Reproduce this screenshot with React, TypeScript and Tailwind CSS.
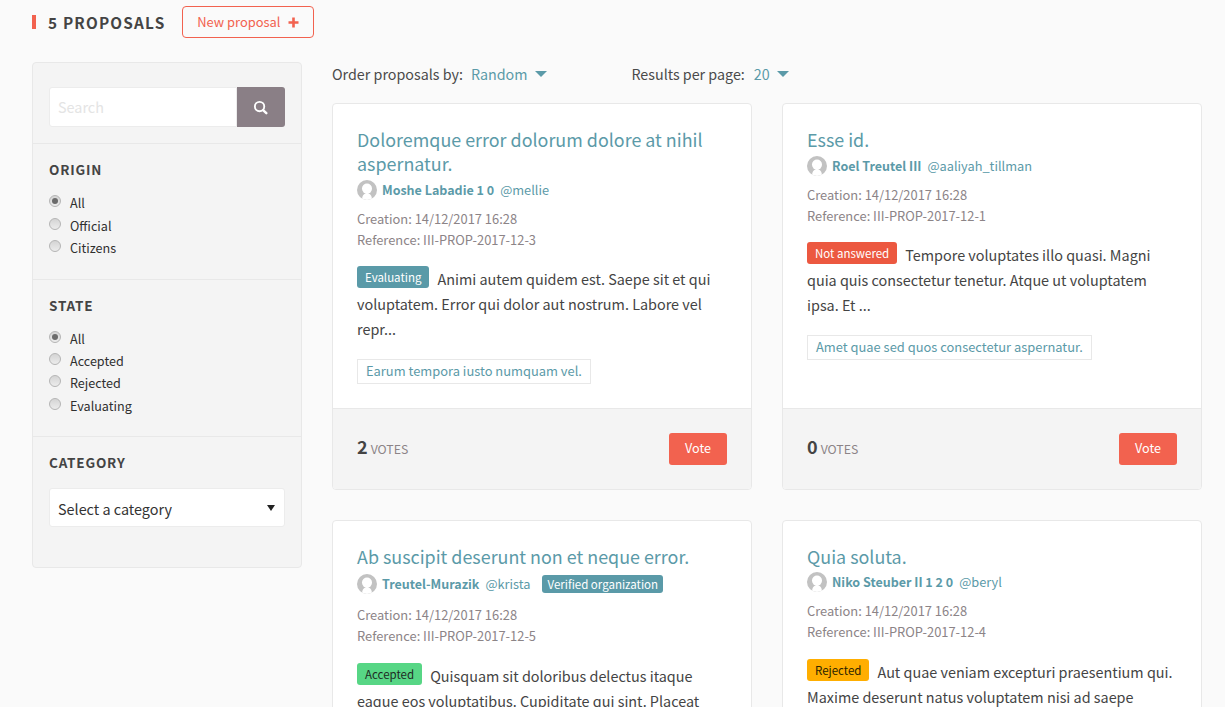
import React from "react";

const FONT = "[font-family:'Noto_Sans_CJK_SC','Liberation_Sans',sans-serif]";

function Avatar() {
  return (
    <svg width="20" height="20" viewBox="0 0 20 20" className="shrink-0">
      <defs>
        <clipPath id="av"><circle cx="10" cy="10" r="10" /></clipPath>
      </defs>
      <g clipPath="url(#av)">
        <rect width="20" height="20" fill="#c2c2c2" />
        <circle cx="10" cy="8.6" r="5" fill="#ffffff" />
        <path d="M5 20 C5 15 7.5 13 10 13 C12.5 13 15 15 15 20 Z" fill="#ffffff" />
      </g>
    </svg>
  );
}

function Radio({ label, checked, mb }: { label: string; checked?: boolean; mb: string }) {
  return (
    <div className={`flex items-start ${mb}`}>
      <span className="mt-[1px] w-[12px] h-[12px] rounded-full border border-[#b5b5b5] bg-gradient-to-b from-[#d4d4d4] to-[#ececec] flex items-center justify-center shrink-0">
        {checked && <span className="w-[6px] h-[6px] rounded-full bg-[#6b6b6b]" />}
      </span>
      <span className="ml-[9px] text-[12.6px] leading-[18px] text-[#2f2f2f]">{label}</span>
    </div>
  );
}

function FilterTitle({ children }: { children: React.ReactNode }) {
  return <div className="text-[13.5px] leading-[20px] font-semibold tracking-[0.8px] text-[#444444]">{children}</div>;
}

type P = {
  title: string[];
  author: string;
  handle: string;
  org?: boolean;
  ref_: string;
  badge: string;
  badgeCls: string;
  lines: string[];
  tag?: string;
  votes?: string;
};

function Card({ p }: { p: P }) {
  return (
    <div className="flex flex-col bg-white border border-[#e8e8e8] rounded-[4px] overflow-hidden">
      <div className="flex-1 px-[24px] pt-[23px] pb-[24px]">
        <h3 className="text-[17.9px] leading-[24px] text-[#5b9aa8] font-normal">
          {p.title.map((t) => (
            <div key={t}>{t}</div>
          ))}
        </h3>
        <div className={`flex items-center ${p.org ? "h-[26px]" : "h-[22px]"} mt-[3.6px] text-[12.5px] leading-[20px]`}>
          <Avatar />
          <span className="ml-[5px] font-semibold text-[#5b9aa8]">{p.author}</span>
          <span className="ml-[6px] text-[12.8px] text-[#5b9aa8]">{p.handle}</span>
          {p.org && (
            <span className="ml-[12px] px-[5px] h-[18px] leading-[18px] rounded-[3px] bg-[#5a9aa8] text-white text-[11.5px]">
              Verified organization
            </span>
          )}
        </div>
        <div className="mt-[7px] text-[12.9px] leading-[21px] text-[#8c8487]">
          <div>Creation: 14/12/2017 16:28</div>
          <div>{p.ref_}</div>
        </div>
        <div className="mt-[16.4px] text-[14.4px] leading-[25px] text-[#444444]">
          {p.lines.map((l, i) => (
            <div key={l} className="whitespace-nowrap">
              {i === 0 && (
                <span className={`inline-block align-top mr-[8px] px-[8px] h-[22px] leading-[22px] rounded-[3px] text-[11.5px] ${p.badgeCls}`}>
                  {p.badge}
                </span>
              )}
              {l}
            </div>
          ))}
        </div>
        {p.tag && (
          <div className="mt-[16px]">
            <span className="inline-block border border-[#e8e8e8] px-[8px] h-[25px] leading-[22px] text-[12.9px] text-[#5b9aa8]">
              {p.tag}
            </span>
          </div>
        )}
      </div>
      {p.votes && (
        <div className="h-[80.6px] bg-[#f4f4f4] border-t border-[#e8e8e8] px-[24px] flex items-center justify-between">
          <div className="flex items-baseline mb-[5px]">
            <span className="text-[18px] font-semibold text-[#444444]">{p.votes}</span>
            <span className="ml-[3px] text-[12.3px] text-[#8c8487]">VOTES</span>
          </div>
          <button className="w-[58px] h-[32px] rounded-[3px] bg-[#f2624f] text-white text-[12.6px]">Vote</button>
        </div>
      )}
    </div>
  );
}

const cards: P[] = [
  {
    title: ["Doloremque error dolorum dolore at nihil", "aspernatur."],
    author: "Moshe Labadie 1 0",
    handle: "@mellie",
    ref_: "Reference: III-PROP-2017-12-3",
    badge: "Evaluating",
    badgeCls: "bg-[#5a9aa8] text-white",
    lines: ["Animi autem quidem est. Saepe sit et qui", "voluptatem. Error qui dolor aut nostrum. Labore vel", "repr..."],
    tag: "Earum tempora iusto numquam vel.",
    votes: "2",
  },
  {
    title: ["Esse id."],
    author: "Roel Treutel III",
    handle: "@aaliyah_tillman",
    ref_: "Reference: III-PROP-2017-12-1",
    badge: "Not answered",
    badgeCls: "bg-[#ec5840] text-white",
    lines: ["Tempore voluptates illo quasi. Magni", "quia quis consectetur tenetur. Atque ut voluptatem", "ipsa. Et ..."],
    tag: "Amet quae sed quos consectetur aspernatur.",
    votes: "0",
  },
  {
    title: ["Ab suscipit deserunt non et neque error."],
    author: "Treutel-Murazik",
    handle: "@krista",
    org: true,
    ref_: "Reference: III-PROP-2017-12-5",
    badge: "Accepted",
    badgeCls: "bg-[#57d685] text-[#1f2a24]",
    lines: ["Quisquam sit doloribus delectus itaque", "eaque eos voluptatibus. Cupiditate qui sint. Placeat"],
  },
  {
    title: ["Quia soluta."],
    author: "Niko Steuber II 1 2 0",
    handle: "@beryl",
    ref_: "Reference: III-PROP-2017-12-4",
    badge: "Rejected",
    badgeCls: "bg-[#ffae00] text-[#2a2200]",
    lines: ["Aut quae veniam excepturi praesentium qui.", "Maxime deserunt natus voluptatem nisi ad saepe"],
  },
];

export default function App() {
  return (
    <div className={`h-[707px] overflow-hidden bg-[#fafafa] ${FONT} pl-[32px] pr-[23px] pt-[6px]`}>
      <div className="flex items-center h-[32px]">
        <span className="w-[4px] h-[14px] bg-[#f2624f]" />
        <span className="ml-[12px] text-[15.3px] font-semibold tracking-[1.2px] text-[#444444]">5 PROPOSALS</span>
        <button className="ml-[17px] h-[32px] w-[132px] rounded-[4px] border border-[#f2624f] text-[#f2624f] text-[12.9px] flex items-center justify-center">
          New proposal
          <svg width="11" height="11" viewBox="0 0 11 11" className="ml-[8px]">
            <path d="M4.2 0.5h2.6v3.7h3.7v2.6H6.8v3.7H4.2V6.8H0.5V4.2h3.7z" fill="#f2624f" />
          </svg>
        </button>
      </div>
      <div className="flex items-start gap-[30px] mt-[24px]">
        <aside className="w-[270px] shrink-0 bg-[#f4f4f4] border border-[#e8e8e8] rounded-[4px] h-[506px]">
          <div className="flex h-[81px] px-[16px] pt-[24px] border-b border-[#e8e8e8]">
            <div className="flex-1 h-[40px] bg-white border border-[#ececec] rounded-l-[3px] pl-[8px] leading-[38px] text-[14.4px] text-[#e4e4e4]">Search</div>
            <div className="w-[48px] h-[40px] bg-[#8a7f86] rounded-r-[3px] flex items-center justify-center">
              <svg width="15" height="15" viewBox="0 0 16 16" fill="none" className="mr-[1px]">
                <circle cx="7" cy="7" r="5" stroke="#fff" strokeWidth="2" />
                <path d="M11 11l3.2 3" stroke="#fff" strokeWidth="2.6" strokeLinecap="round" />
              </svg>
            </div>
          </div>
          <div className="h-[136px] px-[16px] pt-[15px] border-b border-[#e8e8e8]">
            <FilterTitle>ORIGIN</FilterTitle>
            <div className="mt-[15px]">
              <Radio label="All" checked mb="mb-[5px]" />
              <Radio label="Official" mb="mb-[4px]" />
              <Radio label="Citizens" mb="" />
            </div>
          </div>
          <div className="h-[157px] px-[16px] pt-[15px] border-b border-[#e8e8e8]">
            <FilterTitle>STATE</FilterTitle>
            <div className="mt-[15px]">
              <Radio label="All" checked mb="mb-[4px]" />
              <Radio label="Accepted" mb="mb-[4px]" />
              <Radio label="Rejected" mb="mb-[5px]" />
              <Radio label="Evaluating" mb="" />
            </div>
          </div>
          <div className="px-[16px] pt-[15px]">
            <FilterTitle>CATEGORY</FilterTitle>
            <div className="mt-[16px] h-[39px] bg-white border border-[#ececec] rounded-[3px] pl-[8px] pr-[9px] flex items-center justify-between text-[14.4px] text-[#333]">
              <span className="mt-[2px]">Select a category</span>
              <svg width="8" height="6" viewBox="0 0 8 6"><path d="M0 0h8L4 6z" fill="#222" /></svg>
            </div>
          </div>
        </aside>
        <main className="flex-1 min-w-0">
          <div className="flex items-center h-[25px] text-[14.3px] text-[#4a4a4a] -mt-[1px]">
            <span>Order proposals by:</span>
            <span className="ml-[8px] text-[#5b9aa8]">Random</span>
            <svg width="12" height="6" viewBox="0 0 12 6" className="ml-[8px]"><path d="M0 0h12L6 6z" fill="#5b9aa8" /></svg>
            <span className="ml-[84px]">Results per page:</span>
            <span className="ml-[9px] text-[#5b9aa8]">20</span>
            <svg width="12" height="6" viewBox="0 0 12 6" className="ml-[7px]"><path d="M0 0h12L6 6z" fill="#5b9aa8" /></svg>
          </div>
          <div className="grid grid-cols-2 gap-[30px] mt-[17px]">
            {cards.map((c) => (
              <Card key={c.ref_} p={c} />
            ))}
          </div>
        </main>
      </div>
    </div>
  );
}
